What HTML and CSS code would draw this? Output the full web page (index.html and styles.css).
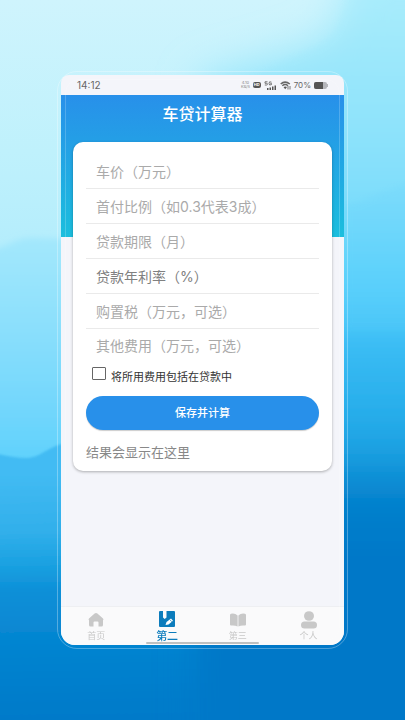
FILE: index.html
```html
<!DOCTYPE html>
<html lang="zh-CN">
<head>
    <meta charset="utf-8">
    <meta name="viewport" content="width=device-width, initial-scale=1">
    <title>车贷计算器</title>
    <link rel="stylesheet" href="styles.css">
</head>
<body>
    <svg class="bg" viewBox="0 0 405 720" preserveAspectRatio="none" aria-hidden="true">
        <defs>
            <linearGradient id="sky" gradientUnits="userSpaceOnUse" x1="0" y1="0" x2="0" y2="720">
                <stop offset="0" stop-color="#cff4fd"/>
                <stop offset="0.21" stop-color="#bff1fc"/>
                <stop offset="0.35" stop-color="#b4edfc"/>
            </linearGradient>
            <linearGradient id="right" gradientUnits="userSpaceOnUse" x1="0" y1="0" x2="0" y2="720">
                <stop offset="0" stop-color="#a8ecfc"/>
                <stop offset="0.11" stop-color="#98e6fb"/>
                <stop offset="0.27" stop-color="#80defb"/>
                <stop offset="0.37" stop-color="#60d4fb"/>
                <stop offset="0.44" stop-color="#4ccafa"/>
                <stop offset="0.48" stop-color="#3abcf4"/>
                <stop offset="0.56" stop-color="#2ab0ec"/>
                <stop offset="0.62" stop-color="#1ea4e4"/>
                <stop offset="0.66" stop-color="#0c90d6"/>
                <stop offset="0.7" stop-color="#0480cc"/>
                <stop offset="0.78" stop-color="#0078c8"/>
            </linearGradient>
            <linearGradient id="hill" gradientUnits="userSpaceOnUse" x1="0" y1="0" x2="0" y2="720">
                <stop offset="0.34" stop-color="#a2e7fc"/>
                <stop offset="0.46" stop-color="#8adffc"/>
                <stop offset="0.56" stop-color="#74d7fc"/>
                <stop offset="0.67" stop-color="#58cffc"/>
            </linearGradient>
            <linearGradient id="wave" gradientUnits="userSpaceOnUse" x1="0" y1="0" x2="12" y2="720">
                <stop offset="0.66" stop-color="#42bbf3"/>
                <stop offset="0.74" stop-color="#31afea"/>
                <stop offset="0.785" stop-color="#1aa1e1"/>
                <stop offset="0.82" stop-color="#0e90d8"/>
                <stop offset="0.9" stop-color="#0484d0"/>
                <stop offset="1" stop-color="#007ac9"/>
            </linearGradient>
            <filter id="soft" x="-20%" y="-20%" width="140%" height="140%">
                <feGaussianBlur stdDeviation="3"/>
            </filter>
            <filter id="edge" x="-20%" y="-20%" width="140%" height="140%">
                <feGaussianBlur stdDeviation="1"/>
            </filter>
            <filter id="wide" x="-20%" y="-20%" width="140%" height="140%">
                <feGaussianBlur stdDeviation="20"/>
            </filter>
        </defs>
        <rect width="405" height="720" fill="url(#sky)"/>
        <path d="M-20 251C8 250 12 237 34 238L100 240V520H-20Z" fill="url(#hill)" filter="url(#soft)"/>
        <path d="M-20 450C0 454 12 458 26 458C40 458 46 448 62 444H250V740H-20Z" fill="url(#wave)" filter="url(#edge)" class="wave"/>
        <path d="M465-40H352C341 14 342 34 312 46L200 80V780H465Z" fill="url(#right)" filter="url(#wide)"/>
        <path d="M465-20H352C341 14 342 34 318 46L200 100V780H465Z" fill="url(#right)" opacity=".35" filter="url(#soft)" class="bg__cloud"/>
        <path d="M345 206C370 200 385 188 425 180V330H345Z" fill="#63cffb" opacity=".18" filter="url(#soft)"/>
    </svg>

    <div class="phone">
        <div class="status">
            <span class="status__time">14:12</span>
            <div class="status__right">
                <span class="status__speed">4.10<br>KB/s</span>
                <span class="status__hd">HD</span>
                <svg width="13" height="9" viewBox="0 0 13 9" aria-hidden="true">
                    <path d="M3.500.8H1V2.300H2.500Q3.500 2.300 3.500 3.100T2.500 4H.8M7.500 1.200Q5-.2 5 2.400T7.500 3.600V2.500H6.400" fill="none" stroke="#666" stroke-width=".9"/>
                    <path d="M3 7h1.500v2H3zM5.500 6.500H7V9H5.500zM8 5.500h1.500V9H8zM10.500 4.500H12V9h-1.500z" fill="#555"/>
                </svg>
                <svg width="11" height="9" viewBox="0 0 11 9" aria-hidden="true">
                    <path d="M.7 3Q5-.8 9.800 3M2.300 4.800Q5.200 2.300 8 4.800" fill="none" stroke="#666" stroke-width="1.500"/>
                    <path d="M3.500 6Q5.200 4.800 7 6L5.200 8.200Z" fill="#555"/>
                    <path d="M8 5v3.500M10 8.500V5" stroke="#777"/>
                </svg>
                <span>70%</span>
                <svg width="14" height="7" viewBox="0 0 14 7" aria-hidden="true">
                    <rect width="13" height="7" rx="2" fill="#b5b6bb"/>
                    <path d="M2 0h7v7H2Q0 7 0 5V2Q0 0 2 0Z" fill="#555"/>
                    <rect x="13" y="2" width="1" height="3" fill="#b5b6bb"/>
                </svg>
            </div>
        </div>

        <main class="main">
            <h1 class="title">车贷计算器</h1>
            <form class="card">
                <input class="field" type="text" placeholder="车价（万元）" aria-label="车价（万元）">
                <input class="field" type="text" placeholder="首付比例（如0.3代表3成）" aria-label="首付比例">
                <input class="field" type="text" placeholder="贷款期限（月）" aria-label="贷款期限（月）">
                <input class="field field--dark" type="text" placeholder="贷款年利率（%）" aria-label="贷款年利率（%）">
                <input class="field" type="text" placeholder="购置税（万元，可选）" aria-label="购置税（万元，可选）">
                <input class="field field--last" type="text" placeholder="其他费用（万元，可选）" aria-label="其他费用（万元，可选）">
                <label class="check">
                    <input class="check__box" type="checkbox">
                    <span>将所用费用包括在贷款中</span>
                </label>
                <button class="submit" type="button">保存并计算</button>
                <p class="result">结果会显示在这里</p>
            </form>
        </main>

        <nav class="tabs">
            <a class="tab" href="#">
                <svg width="18" height="16" viewBox="0 0 18 16" aria-hidden="true">
                    <path d="M7.600 1.500Q9 .5 10.400 1.500L16 6.500Q17 7.500 16 8.300V13Q16 14.500 14.500 14.500H11.500V10.500Q11.500 9.500 10.500 9.500H7.500Q6.500 9.500 6.500 10.500V14.500H3.500Q2 14.500 2 13V8.300Q1 7.500 2 6.500Z" fill="#c8c8c8"/>
                </svg>
                <span>首页</span>
            </a>
            <a class="tab tab--active" href="#">
                <svg width="18" height="18" viewBox="0 0 18 18" aria-hidden="true">
                    <path d="M2 0H5V6.500L6.700 8L8.500 6.500V0H16Q17 0 17 1V15Q17 16 16 16H2Q1 16 1 15V1Q1 0 2 0Z" fill="#0c7cbc"/>
                    <path d="M7.500 14L8.500 11L13 7.500L15 9.700L10.500 13.500Z" fill="#fff"/>
                    <path d="M12 8.800L13.700 10.700" stroke="#0c7cbc" stroke-width=".7"/>
                </svg>
                <span>第二</span>
            </a>
            <a class="tab" href="#">
                <svg width="18" height="16" viewBox="0 0 18 16" aria-hidden="true">
                    <path d="M8.600 3.500Q6 1 2 1.800Q1 2 1 3V12.500Q1 13.500 2 13.500Q6 13 8.600 14.500ZM9.400 3.500Q12 1 16 1.800Q17 2 17 3V12.500Q17 13.500 16 13.500Q12 13 9.400 14.500Z" fill="#c8c8c8"/>
                </svg>
                <span>第三</span>
            </a>
            <a class="tab" href="#">
                <svg width="18" height="18" viewBox="0 0 18 18" aria-hidden="true">
                    <ellipse cx="9" cy="5" rx="5" ry="4.800" fill="#c8c8c8"/>
                    <rect x="1" y="10.500" width="16" height="7" rx="3.500" fill="#c8c8c8"/>
                </svg>
                <span>个人</span>
            </a>
        </nav>
    </div>
</body>
</html>
```
FILE: styles.css
```css
* {
    margin: 0;
    padding: 0;
    box-sizing: border-box;
}
body {
    display: flex;
    min-height: 100vh;
    padding: 75px 61px;
    background: #0078c8;
    font-family: Inter, "Noto Sans CJK SC", sans-serif;
}
.bg {
    position: fixed;
    top: 0;
    left: 0;
    z-index: -1;
    width: 100%;
    height: 100%;
}
.phone {
    position: relative;
    flex: 1;
    display: flex;
    flex-direction: column;
    min-width: 0;
    border-radius: 8px 8px 14px 14px;
    background: #f4f5fa;
}
/* 手机外框的两条细线 */
.phone::before,
.phone::after {
    content: "";
    position: absolute;
    border: 1px solid rgba(255, 255, 255, 0.3);
    pointer-events: none;
}
.phone::before {
    inset: -4px;
    border-radius: 20px;
}
.phone::after {
    inset: 4px;
    border-color: rgba(255, 255, 255, 0.2);
    border-radius: 14px;
}
.status {
    display: flex;
    align-items: center;
    justify-content: space-between;
    height: 20px;
    padding: 0 16px;
    color: #666;
    font-size: 8px;
}
.status__time {
    font-size: 10px;
}
.status__right {
    display: flex;
    align-items: center;
    gap: 3px;
}
.status__speed {
    color: #888;
    font-size: 4px;
    line-height: 4px;
    text-align: center;
}
.status__hd {
    padding: 0 1px;
    border-radius: 2px;
    background: #555;
    color: #fff;
    font-size: 4px;
    font-weight: bold;
    line-height: 6px;
}
.main {
    flex: 1;
    padding: 0 12px;
    background: linear-gradient(#2890ea, #1bbedd) no-repeat;
    background-size: 100% 142px;
}
.title {
    padding: 7px 0 16px;
    color: #fff;
    font-size: 16px;
    font-weight: 500;
    line-height: 24px;
    text-align: center;
}
.card {
    display: flex;
    flex-direction: column;
    padding: 12px 13px 9px;
    border-radius: 10px;
    background: #fff;
    box-shadow: 0 1px 3px rgba(0, 0, 0, 0.3);
}
.field {
    width: 100%;
    height: 35px;
    padding: 0 10px;
    border: 0;
    border-bottom: 1px solid #eaeaea;
    outline: none;
    background: none;
    color: #333;
    font: 14px/20px Inter, "Noto Sans CJK SC", sans-serif;
}
.field::placeholder {
    color: #aaa;
}
.field--dark::placeholder {
    color: #808080;
}
.field--last {
    height: 32px;
    border-bottom: 0;
}
.check {
    display: flex;
    gap: 5px;
    height: 35px;
    padding: 6px 6px;
    color: #333;
    font-size: 11px;
    line-height: 20px;
}
.check__box {
    appearance: none;
    width: 14px;
    height: 13px;
    border: 1px solid #666;
    border-radius: 1px;
}
.check__box:checked {
    background: #2890ea;
}
.submit {
    height: 34px;
    border: 0;
    border-radius: 17px;
    background: #2890ea;
    box-shadow: 0 1px 1px rgba(0, 0, 0, 0.2);
    color: #fff;
    font: 500 11px/16px Inter, "Noto Sans CJK SC", sans-serif;
    cursor: pointer;
}
.result {
    padding-top: 12px;
    color: #888;
    font-size: 13px;
    line-height: 20px;
}
.tabs {
    position: relative;
    display: flex;
    height: 39px;
    border-top: 1px solid #eeeff2;
    border-radius: 0 0 14px 14px;
    background: #fafafb;
}
/* 底部手势条 */
.tabs::after {
    content: "";
    position: absolute;
    bottom: 1px;
    left: 30%;
    width: 40%;
    height: 2px;
    border-radius: 1px;
    background: #bfc0c0;
}
.tab {
    flex: 1;
    display: flex;
    flex-direction: column;
    align-items: center;
    padding-top: 4px;
    color: #c8c8c8;
    font-size: 9px;
    line-height: 14px;
    text-decoration: none;
}
.tab svg {
    height: 18px;
}
.tab--active {
    color: #0c7cbc;
    font-size: 11px;
    font-weight: 500;
}
```
